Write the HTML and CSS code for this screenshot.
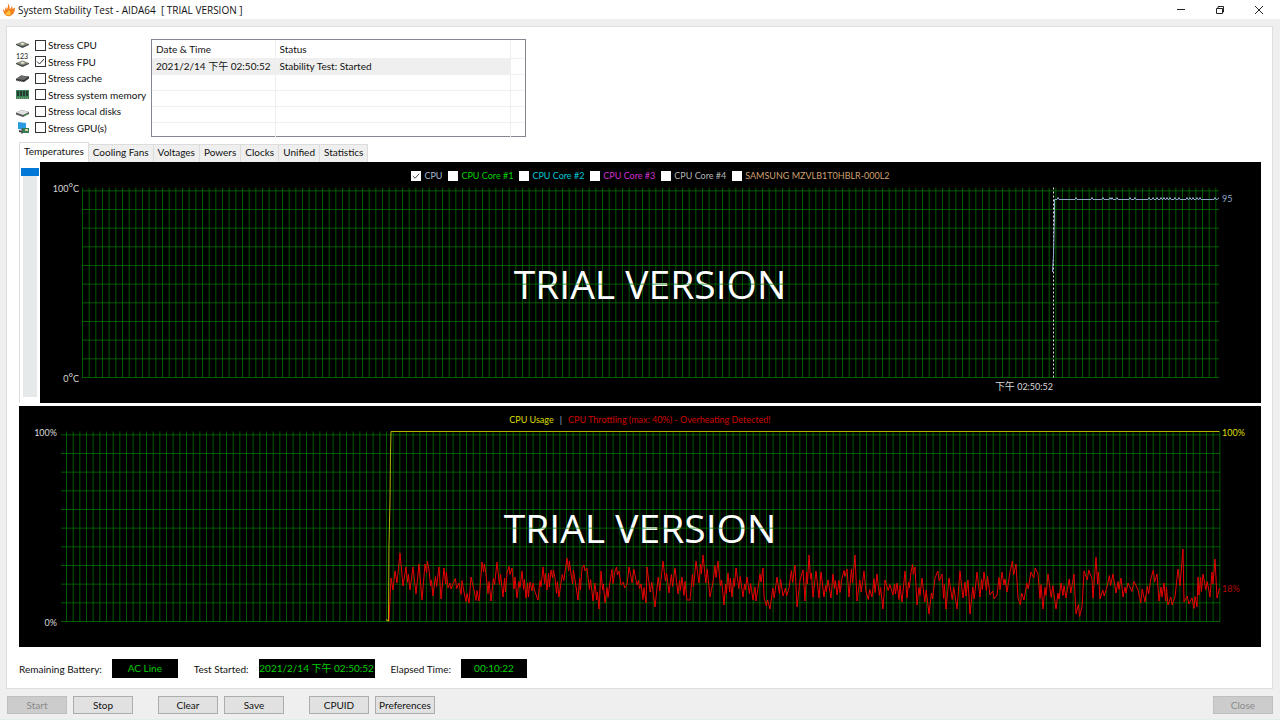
FILE: index.html
```html
<!DOCTYPE html>
<html lang="en">
    <head>
        <meta charset="utf-8">
        <title>System Stability Test - AIDA64</title>
        <link rel="stylesheet" href="styles.css">
        <script src="charts.js" defer></script>
    </head>
    <body>
        <header class="titlebar">
            <svg class="flame" viewBox="0 0 12 14">
                <path d="M4.500 0c2 2 2.500 4 2 6 1.500-.5 2-1.500 2-3 1 1 1 2 1 3l2.500-1.500c0 4-1.500 7.500-5 8.500C3 14 .5 11 0 6l2 2c0-1.500 0-3 1-4 0 1 .5 2 1 2 1-2 1.500-4 .5-6z" fill="#f58220"/>
                <path d="M6 7c1 2 2.500 2.500 1 5-2.500 1-4.500-.5-4.500-2.500l1.500.5c0-1.500 1.500-1.500 2-3z" fill="#ffc83c"/>
            </svg>
            <h1>System Stability Test - AIDA64&nbsp; [ TRIAL VERSION ]</h1>
            <div class="window-buttons">
                <button aria-label="Minimize"><svg viewBox="0 0 10 10"><path d="M1 4.500h8"/></svg></button>
                <button aria-label="Restore"><svg viewBox="0 0 10 10"><path d="M1.500 3.500h6v5h-6zM3 3v-1.500h5.500v5.500h-1"/></svg></button>
                <button aria-label="Close window"><svg viewBox="0 0 10 10"><path d="M1 1l8 8M9 1l-8 8"/></svg></button>
            </div>
        </header>

        <main>
            <section class="setup">
                <div class="stress">
                    <label>
                        <svg viewBox="0 0 14 14"><path d="M0 6h13v1L6.500 10 0 7z" fill="#3d4440"/><path d="M0 6l6.500-2.500L13 6 6.500 8.500z" fill="#85897a"/><path d="M4 6l2.500-1.500L9 6 6.500 7z" fill="#e9e6d8"/></svg>
                        <input type="checkbox">Stress CPU
                    </label>
                    <label>
                        <svg viewBox="0 0 14 14"><path d="M0 8h13v1L6.500 12 0 9z" fill="#3d4440"/><path d="M0 8l6.500-2.500L13 8l-6.500 2.500z" fill="#85897a"/><path d="M4 8l2.500-1.500L9 8 6.500 9z" fill="#e9e6d8"/><text x="0" y="4">123</text></svg>
                        <input type="checkbox" checked>Stress FPU
                    </label>
                    <label>
                        <svg viewBox="0 0 14 14"><path d="M0 8l5-3.500 8 1v2L8 11 0 9.500z" fill="#333"/><path d="M0 8l5-3.500 8 1L8 9z" fill="#6c6c6c"/><path d="M1.500 9v1.500M3.500 9.500v1.500M5.500 9.500v1.500" stroke="#888" stroke-width=".7"/></svg>
                        <input type="checkbox">Stress cache
                    </label>
                    <label>
                        <svg viewBox="0 0 14 14"><path d="M0 2h13v9H0z" fill="#3b8259"/><path d="M1 3h2v5H1zM4 3h2v5H4zM7 3h2v5H7zM10 3h2v5h-2z" fill="#263b32"/><path d="M1 10h11" stroke="#a9ae7a" stroke-dasharray="1 1"/></svg>
                        <input type="checkbox">Stress system memory
                    </label>
                    <label>
                        <svg viewBox="0 0 14 14"><path d="M0 8.500l6-2.500 7 2v2L7 13 0 10.500z" fill="#555"/><path d="M0 8.500L6 6l7 2-6 3z" fill="#e1e1e1"/><path d="M8.500 11.500l3-1.500" stroke="#46b34b"/></svg>
                        <input type="checkbox">Stress local disks
                    </label>
                    <label>
                        <svg viewBox="0 0 14 14"><path d="M2 1l8 1v7l-8-1z" fill="#2d9be0"/><path d="M3 9l4 1v2l-4-1z" fill="#444"/><path d="M6 7h7v5H6z" fill="#317b55"/><path d="M9 8h3v2H9z" fill="#d7d29a"/><path d="M6 7v6" stroke="#555"/></svg>
                        <input type="checkbox">Stress GPU(s)
                    </label>
                </div>

                <div class="log">
                    <table>
                        <thead>
                            <tr><th class="time">Date &amp; Time</th><th class="status">Status</th><th></th></tr>
                        </thead>
                        <tbody>
                            <tr class="selected"><td>2021/2/14 下午 02:50:52</td><td>Stability Test: Started</td><td></td></tr>
                            <tr><td></td><td></td><td></td></tr>
                            <tr><td></td><td></td><td></td></tr>
                            <tr><td></td><td></td><td></td></tr>
                            <tr><td></td><td></td><td></td></tr>
                        </tbody>
                    </table>
                </div>
            </section>

            <nav class="tabs">
                <button class="tab active">Temperatures</button>
                <button class="tab">Cooling Fans</button>
                <button class="tab">Voltages</button>
                <button class="tab">Powers</button>
                <button class="tab">Clocks</button>
                <button class="tab">Unified</button>
                <button class="tab">Statistics</button>
            </nav>

            <section class="temperatures">
                <input class="zoom" type="range" min="0" max="10" value="0" aria-label="Graph scale">
                <div class="chart">
                    <div class="legend">
                        <label class="cpu"><input type="checkbox" checked>CPU</label>
                        <label class="core1"><input type="checkbox">CPU Core #1</label>
                        <label class="core2"><input type="checkbox">CPU Core #2</label>
                        <label class="core3"><input type="checkbox">CPU Core #3</label>
                        <label class="core4"><input type="checkbox">CPU Core #4</label>
                        <label class="ssd"><input type="checkbox">SAMSUNG MZVLB1T0HBLR-000L2</label>
                    </div>
                    <svg viewBox="40 184 1221 219">
                        <path id="temp-cols" class="grid"/>
                        <text class="trial" x="650" y="299">TRIAL VERSION</text>
                        <path id="temp-rows" class="grid"/>
                        <path class="start-mark" d="M1053.500 187.500V378"/>
                        <path id="temp-line" class="line-cpu"/>
                        <text class="scale" x="79" y="192">100<tspan class="degree">°</tspan>C</text>
                        <text class="scale" x="79" y="382">0<tspan class="degree">°</tspan>C</text>
                        <text class="value-cpu" x="1222" y="202">95</text>
                        <text class="scale" x="1053" y="390"><tspan class="ampm">下午</tspan> 02:50:52</text>
                    </svg>
                </div>
            </section>

            <section class="chart">
                <div class="legend usage-legend">
                    <span class="usage">CPU Usage</span>
                    <span class="divider">|</span>
                    <span class="throttle">CPU Throttling (max: 40%) - Overheating Detected!</span>
                </div>
                <svg viewBox="19 428 1242 219">
                    <path id="usage-cols" class="grid"/>
                    <text class="trial" x="640" y="543">TRIAL VERSION</text>
                    <path id="usage-rows" class="grid"/>
                    <path id="throttle-line" class="line-throttle"/>
                    <path class="line-usage" d="M386.500 619l1 2h1l.5-76 1-45 .5-46 .5-22.500H1219.500"/>
                    <text class="scale" x="57" y="436">100%</text>
                    <text class="scale" x="57" y="626">0%</text>
                    <text class="value-usage" x="1222" y="436">100%</text>
                    <text class="value-throttle" x="1222" y="592">18%</text>
                </svg>
            </section>

            <section class="state">
                <label for="battery">Remaining Battery:</label>
                <output id="battery">AC Line</output>
                <label for="started">Test Started:</label>
                <output id="started" class="wide">2021/2/14 下午 02:50:52</output>
                <label for="elapsed">Elapsed Time:</label>
                <output id="elapsed">00:10:22</output>
            </section>
        </main>

        <footer class="actions">
            <div class="group"><button disabled>Start</button><button>Stop</button></div>
            <div class="group"><button>Clear</button><button>Save</button></div>
            <div class="group"><button>CPUID</button><button>Preferences</button></div>
            <button class="close" disabled>Close</button>
        </footer>
    </body>
</html>
```
FILE: styles.css
```css
* {
    box-sizing: border-box;
}
body {
    margin: 0;
    min-height: 100vh;
    display: flex;
    flex-direction: column;
    background: #efefef;
    border-bottom: 1px solid #e2edf0;
    color: #111;
    font: 10px/16px Lato, "Noto Sans CJK TC", sans-serif;
}
button,input {
    margin: 0;
    font: inherit;
    color: inherit;
}
svg {
    display: block;
}

.titlebar {
    display: flex;
    align-items: center;
    height: 19px;
    padding: 0 2px 0 3px;
    background: #fff;
}
.titlebar h1 {
    margin: 0;
    flex: 1;
    font: 400 10px/16px "Open Sans", sans-serif;
}
.flame {
    width: 12px;
    height: 14px;
    margin-right: 3px;
}
.window-buttons {
    display: flex;
}
.window-buttons button {
    width: 39px;
    height: 19px;
    padding: 0;
    border: 0;
    background: none;
}
.window-buttons svg {
    width: 10px;
    height: 10px;
    margin: 0 auto;
    fill: none;
    stroke: #222;
}

main {
    flex: 1;
    margin: 7px 7px 0 6px;
    padding: 12px 11px 10px 12px;
    background: #fff;
    border: 1px solid #dedede;
}
.setup {
    display: flex;
    height: 98px;
}
.stress {
    display: grid;
    grid-template-rows: repeat(6, 1fr);
    width: 135px;
    height: 99px;
    margin: -2px 0 0 -3px;
    white-space: nowrap;
}
.stress label {
    display: flex;
    align-items: center;
}
.stress svg {
    width: 14px;
    height: 14px;
    margin-right: 5px;
    overflow: visible;
}
.stress text {
    font-size: 7px;
    fill: #222;
}
input[type=checkbox] {
    appearance: none;
    width: 11px;
    height: 11px;
    margin-right: 2px;
    background: #fff;
    border: 1px solid #333;
}
input[type=checkbox]:checked {
    background: #fff url("data:image/svg+xml,%3Csvg xmlns='http://www.w3.org/2000/svg' viewBox='0 0 9 9'%3E%3Cpath d='M1 4.500l2.500 2.500L8 2' fill='none' stroke='%23333'/%3E%3C/svg%3E");
}
.log {
    width: 375px;
    border: 1px solid #828790;
}
table {
    width: 100%;
    border-collapse: collapse;
    table-layout: fixed;
}
th,td {
    height: 16px;
    padding: 0 3px 0 4px;
    line-height: 15px;
    font-weight: 400;
    text-align: left;
    border-right: 1px solid #eee;
    border-bottom: 1px solid #f0f0f0;
    white-space: nowrap;
}
th {
    height: 18px;
    padding-top: 2px;
}
th:last-child,td:last-child {
    border-right: 0;
}
tr:last-child td {
    border-bottom: 0;
}
.time {
    width: 123px;
}
.status {
    width: 235px;
}
.selected td {
    background: #efefef;
}
.selected td:last-child {
    background: #fff;
}

.tabs {
    display: flex;
    align-items: flex-end;
    height: 20px;
    margin-top: 5px;
}
.tab {
    height: 18px;
    padding: 0 4px 3px;
    border: 1px solid #dcdcdc;
    border-left: 0;
    border-bottom: 0;
    background: #efefef;
    line-height: 15px;
    white-space: nowrap;
}
.tab.active {
    height: 20px;
    border-left: 1px solid #dcdcdc;
    background: #fff;
}

.temperatures {
    display: flex;
    margin-bottom: 3px;
    border-left: 1px solid #dcdcdc;
}
.zoom {
    appearance: none;
    writing-mode: vertical-lr;
    width: 18px;
    height: 229px;
    margin: 6px 1px 0;
    background: linear-gradient(#e5e9ea, #e5e9ea) center / 14px 100% no-repeat;
}
.zoom::-webkit-slider-thumb {
    appearance: none;
    width: 18px;
    height: 8px;
    background: #0078d7;
}
.chart {
    flex: 1;
    background: #000;
}
.chart svg {
    width: 100%;
    overflow: visible;
}
.legend {
    display: flex;
    justify-content: center;
    align-items: center;
    gap: 6px;
    height: 22px;
    padding-top: 5px;
    font-size: 9px;
    line-height: 12px;
}
.legend label {
    display: flex;
    align-items: center;
}
.legend input[type=checkbox] {
    width: 10px;
    height: 10px;
    margin-right: 3px;
    border-color: #fff;
}
.usage-legend {
    padding-top: 6px;
}
.cpu,.divider {
    color: #a9b9d6;
}
.core1 {
    color: #00d000;
}
.core2 {
    color: #00c8d8;
}
.core3 {
    color: #d030d0;
}
.core4 {
    color: #b4b4b4;
}
.ssd {
    color: #d0a070;
}
.usage {
    color: #dddd00;
}
.throttle {
    color: #d00000;
}

.grid {
    fill: none;
    stroke: #008000;
    stroke-width: .7;
}
.trial {
    fill: #fff;
    font: 39px "Open Sans", sans-serif;
    text-anchor: middle;
}
.start-mark {
    stroke: #ddd;
    stroke-dasharray: 2 2;
}
.line-cpu,.line-throttle,.line-usage {
    fill: none;
    stroke: #93a9cc;
}
.line-throttle {
    stroke: #e80000;
}
.line-usage {
    stroke: #b5b500;
}
.scale,.value-cpu,.value-usage,.value-throttle {
    font-size: 9px;
    fill: #d8d8d8;
}
.scale {
    text-anchor: end;
}
.degree {
    font-size: 11px;
}
.ampm {
    font-size: 10px;
}
.value-cpu {
    fill: #93a9cc;
}
.value-usage {
    fill: #dddd00;
}
.value-throttle {
    fill: #b00000;
}

.state {
    display: flex;
    align-items: center;
    margin-top: 12px;
}
.state output {
    width: 66px;
    margin: 0 16px 0 10px;
    background: #000;
    color: #00d000;
    line-height: 19px;
    text-align: center;
    white-space: nowrap;
}
.state .wide {
    width: 116px;
}

.actions {
    display: flex;
    gap: 25px;
    padding: 7px 7px 5px;
}
.group {
    display: flex;
    gap: 6px;
}
.actions button {
    width: 60px;
    height: 18px;
    padding: 0;
    background: #e1e1e1;
    border: 1px solid #adadad;
    line-height: 16px;
}
.actions button:disabled {
    background: #ccc;
    border-color: #bfbfbf;
    color: #8a8a8a;
}
.actions .close {
    margin-left: auto;
}
```
FILE: charts.js
```js
function columns(from, to, top, bottom) {
    let d = '';
    for (let x = from; x <= to; x += 20 / 3) d += `M${x.toFixed(2)} ${top}V${bottom}`;
    return d;
}

function rows(left, right, bottom) {
    let d = '';
    for (let i = 0; i <= 10; i++) d += `M${left} ${(bottom - i * 56 / 3).toFixed(2)}H${right}`;
    return d;
}

function draw(id, d) {
    document.getElementById(id).setAttribute('d', d);
}

draw('temp-cols', columns(82.5, 1219, 187.5, 378));
draw('temp-rows', rows(82, 1219, 377.5));
draw('usage-cols', columns(66.5, 1220, 431.5, 622));
draw('usage-rows', rows(61, 1220, 621.5));

// temperature: ramps up, then stays at 95 with one degree bumps
const bumps = [1058, 1076, 1092, 1103, 1110, 1112, 1117, 1130, 1135, 1149, 1153, 1157, 1161, 1164, 1167, 1170, 1175, 1179, 1187, 1190, 1193, 1197, 1200, 1215];
let temp = 'M1052.5 272L1053.5 255L1054.5 215V199.5';
bumps.forEach(x => temp += `L${x - 1} 199.500L${x} 197.500L${x + 1} 199.500`);
draw('temp-line', temp + 'H1217L1219 198');

// turning points of the throttling curve
const peaks = [
    [389,621],[391,578],[393,590],[395,571],[397,583],[400,553],[403,586],[406,567],[410,590],[413,567],[416,594],[419,564],[422,600],[425,564],
    [429,570],[433,596],[439,567],[441,599],[444,568],[448,588],[453,584],[459,583],[464,592],[469,603],[471,577],[474,590],[479,601],[482,562],[486,574],
    [491,601],[497,562],[503,597],[507,573],[512,568],[517,598],[522,571],[526,598],[530,582],[535,592],[538,600],[543,567],[547,590],[551,570],[555,578],
    [559,597],[567,558],[571,574],[575,580],[578,600],[582,568],[587,568],[593,601],[595,583],[599,609],[601,571],[605,603],[610,582],[615,571],
    [619,571],[621,585],[627,585],[629,567],[637,585],[641,584],[646,603],[647,567],[655,607],[663,561],[669,593],[675,568],[678,594],[682,577],
    [687,600],[690,600],[696,561],[699,583],[703,555],[710,597],[713,582],[718,561],[724,605],[728,573],[732,597],[736,568],[743,597],[747,577],[753,600],
    [758,588],[763,568],[764,597],[770,609],[777,577],[783,596],[789,588],[795,565],[797,607],[800,580],[803,570],[805,601],[809,555],[813,597],
    [816,571],[819,598],[821,572],[824,597],[828,580],[831,598],[833,574],[837,595],[842,578],[847,569],[849,597],[855,555],[857,601],[864,571],
    [866,592],[872,597],[877,574],[883,609],[885,580],[893,595],[897,583],[902,602],[905,571],[907,598],[911,572],[915,567],[917,605],[922,578],
    [929,614],[935,578],[942,574],[946,609],[949,578],[957,609],[960,571],[963,598],[968,580],[970,614],[977,572],[980,597],[984,572],[990,595],
    [997,595],[1002,572],[1007,592],[1010,572],[1016,564],[1018,598],[1024,600],[1031,572],[1038,574],[1043,609],[1048,574],[1056,609],[1061,583],
    [1066,598],[1074,574],[1076,614],[1082,607],[1084,571],[1092,579],[1093,598],[1096,557],[1100,599],[1107,587],[1113,574],[1116,593],[1121,578],
    [1123,597],[1128,583],[1138,590],[1145,602],[1151,578],[1157,574],[1159,601],[1164,583],[1168,605],[1175,597],[1178,569],[1180,586],[1183,549],
    [1184,602],[1192,598],[1197,607],[1198,577],[1199,595],[1203,574],[1210,597],[1215,559],[1217,598],[1219.5,588]
];
let throttle = 'M386.500 620';
peaks.forEach(([x, y], i) => {
    const [px, py] = peaks[i - 1] || [x, y];
    // small swings between two distant turning points
    if (x - px > 3) {
        const my = (y + py) / 2;
        const swing = 3 + i * 7 % 5;
        const dir = y > py ? -1 : 1;
        throttle += `L${px + (x - px) * .4} ${my - swing * dir}L${px + (x - px) * .6} ${my + swing * dir}`;
    }
    throttle += `L${x} ${y}`;
});
draw('throttle-line', throttle);
```
